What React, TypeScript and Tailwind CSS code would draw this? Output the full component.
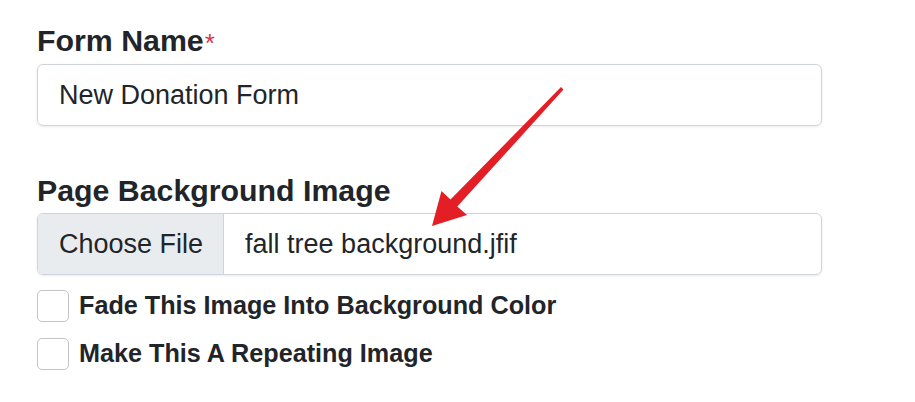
import React from 'react';

const Checkbox: React.FC<{ label: string }> = ({ label }) => (
  <label className="flex items-center gap-[10px] h-[32px]">
    <span className="w-[32px] h-[32px] rounded-[5px] border border-[#c4c4c4] bg-white shrink-0" />
    <span className="text-[25.2px] font-bold leading-none">{label}</span>
  </label>
);

export default function App() {
  return (
    <div className="relative w-[915px] h-[402px] bg-white text-[#212529] font-['Liberation_Sans',Arial,sans-serif] overflow-hidden">
      <div className="pl-[37px] pt-[23px] w-[822px]">
        <label className="block text-[30.3px] leading-[36px] font-bold">
          Form Name
          <span className="text-[#dc3545] font-normal text-[26px] align-top relative top-[2px] ml-[1px]">*</span>
        </label>
        <div className="mt-[5px] h-[62px] flex items-center px-[21px] border border-[#d0d4d8] rounded-[6px] shadow-[0_1px_3px_rgba(0,0,0,0.08)] text-[27px]">
          New Donation Form
        </div>

        <label className="block mt-[47px] text-[30.3px] leading-[36px] font-bold">
          Page Background Image
        </label>
        <div className="mt-[4px] h-[62px] flex border border-[#ced4da] rounded-[6px] overflow-hidden shadow-[0_1px_3px_rgba(0,0,0,0.08)] text-[27px]">
          <div className="flex items-center pl-[21px] pr-[20px] bg-[#e9ecef] border-r border-[#ced4da]">Choose File</div>
          <div className="flex items-center pl-[21px]">fall tree background.jfif</div>
        </div>

        <div className="mt-[15px] flex flex-col gap-[16px]">
          <Checkbox label="Fade This Image Into Background Color" />
          <Checkbox label="Make This A Repeating Image" />
        </div>
      </div>

      <svg className="absolute inset-0 pointer-events-none" width="915" height="402" viewBox="0 0 915 402">
        <polygon
          points="561,87 563.5,89.5 457.3,206.5 467,215 432,226 441.5,191 450.5,199.5"
          fill="#e31e24"
        />
      </svg>
    </div>
  );
}
